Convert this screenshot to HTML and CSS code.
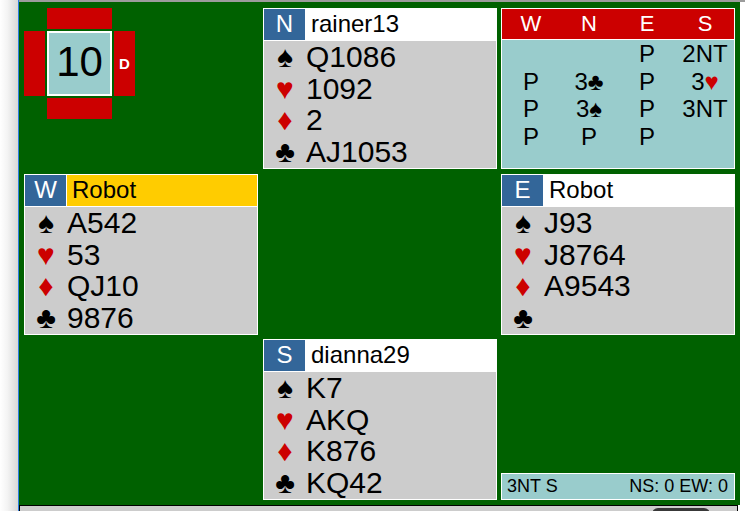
FILE: index.html
```html
<!DOCTYPE html>
<html>
<head>
<meta charset="utf-8">
<link rel="stylesheet" href="styles.css">
</head>
<body>
<div class="page">
  <div class="gutter"></div>
  <div class="main">
    <div class="topline"></div>
    <div class="table-area">
      <div class="board">
        <div class="dealer">
          <div class="bar bar-top"></div>
          <div class="bar bar-left"></div>
          <div class="board-no">10</div>
          <div class="bar bar-right">D</div>
          <div class="bar bar-bottom"></div>
        </div>

        <div class="hand north">
          <div class="hand-head"><div class="seat">N</div><div class="name">rainer13</div></div>
          <div class="hand-body">
            <div class="suit-row"><span class="suit">♠</span><span class="cards">Q1086</span></div>
            <div class="suit-row"><span class="suit red">♥</span><span class="cards">1092</span></div>
            <div class="suit-row"><span class="suit red">♦</span><span class="cards">2</span></div>
            <div class="suit-row"><span class="suit">♣</span><span class="cards">AJ1053</span></div>
          </div>
        </div>

        <div class="auction">
          <div class="auction-head"><span>W</span><span>N</span><span>E</span><span>S</span></div>
          <div class="auction-body">
            <span></span><span></span><span>P</span><span>2NT</span>
            <span>P</span><span>3♣</span><span>P</span><span>3<span class="red">♥</span></span>
            <span>P</span><span>3♠</span><span>P</span><span>3NT</span>
            <span>P</span><span>P</span><span>P</span><span></span>
          </div>
        </div>

        <div class="hand west">
          <div class="hand-head"><div class="seat">W</div><div class="name active">Robot</div></div>
          <div class="hand-body">
            <div class="suit-row"><span class="suit">♠</span><span class="cards">A542</span></div>
            <div class="suit-row"><span class="suit red">♥</span><span class="cards">53</span></div>
            <div class="suit-row"><span class="suit red">♦</span><span class="cards">QJ10</span></div>
            <div class="suit-row"><span class="suit">♣</span><span class="cards">9876</span></div>
          </div>
        </div>

        <div class="hand east">
          <div class="hand-head"><div class="seat">E</div><div class="name">Robot</div></div>
          <div class="hand-body">
            <div class="suit-row"><span class="suit">♠</span><span class="cards">J93</span></div>
            <div class="suit-row"><span class="suit red">♥</span><span class="cards">J8764</span></div>
            <div class="suit-row"><span class="suit red">♦</span><span class="cards">A9543</span></div>
            <div class="suit-row"><span class="suit">♣</span><span class="cards"></span></div>
          </div>
        </div>

        <div class="hand south">
          <div class="hand-head"><div class="seat">S</div><div class="name">dianna29</div></div>
          <div class="hand-body">
            <div class="suit-row"><span class="suit">♠</span><span class="cards">K7</span></div>
            <div class="suit-row"><span class="suit red">♥</span><span class="cards">AKQ</span></div>
            <div class="suit-row"><span class="suit red">♦</span><span class="cards">K876</span></div>
            <div class="suit-row"><span class="suit">♣</span><span class="cards">KQ42</span></div>
          </div>
        </div>

        <div class="score"><span>3NT S</span><span>NS: 0 EW: 0</span></div>
      </div>
      <div class="strip"></div>
    </div>
    <div class="bottombar"><div class="knob"></div></div>
  </div>
</div>
</body>
</html>
```
FILE: styles.css
```css
html, body {
  margin: 0;
  padding: 0;
  background: #ffffff;
  font-family: "Liberation Sans", Arial, sans-serif;
  color: #000;
}

.page {
  display: flex;
  width: 745px;
  height: 511px;
  overflow: hidden;
}

.gutter {
  width: 18px;
  flex: none;
  background: linear-gradient(to right, #ffffff 0%, #f4f4f4 40%, #d8d8d8 100%);
  border-right: 1px solid #2b7de0;
}

.main {
  flex: 1;
  min-width: 0;
  display: flex;
  flex-direction: column;
}

.topline {
  height: 2px;
  background: #9c9c9c;
}

.table-area {
  display: flex;
  height: 503px;
}

.strip {
  flex: 1;
  background: #ffffff;
}

.board {
  width: 721px;
  flex: none;
  box-sizing: border-box;
  background: #006100;
  padding: 6px 0 0 5px;
  display: grid;
  grid-template-columns: 239px 238px 234px;
  grid-template-rows: 166px 165px 161px;
}

.bottombar {
  width: 719px;
  height: 6px;
  box-sizing: border-box;
  border: 1px solid #000;
  border-bottom: none;
  background: #cccccc;
  position: relative;
}

.knob {
  position: absolute;
  left: 632px;
  top: 2px;
  width: 58px;
  height: 8px;
  background: #383838;
  border-radius: 6px 6px 0 0;
}

/* dealer indicator */
.dealer {
  grid-column: 1;
  grid-row: 1;
  align-self: start;
  justify-self: start;
  display: grid;
  grid-template-columns: 21px 65px 21px;
  grid-template-rows: 21px 65px 21px;
  gap: 2px;
}

.bar {
  background: #cc0000;
}

.bar-top { grid-column: 2; grid-row: 1; }
.bar-left { grid-column: 1; grid-row: 2; }
.bar-right {
  grid-column: 3;
  grid-row: 2;
  color: #ffffff;
  font-weight: bold;
  font-size: 15px;
  display: flex;
  align-items: center;
  justify-content: center;
}
.bar-bottom { grid-column: 2; grid-row: 3; }

.board-no {
  grid-column: 2;
  grid-row: 2;
  box-sizing: border-box;
  border: 2px solid #ffffff;
  background: #99cccc;
  font-size: 42px;
  display: flex;
  align-items: center;
  justify-content: center;
  padding-bottom: 3px;
}

/* hands */
.hand {
  width: 234px;
  height: 161px;
  box-sizing: border-box;
  border: 1px solid #ffffff;
  background: #cccccc;
  align-self: start;
}

.north { grid-column: 2; grid-row: 1; }
.west { grid-column: 1; grid-row: 2; }
.east { grid-column: 3; grid-row: 2; }
.south { grid-column: 2; grid-row: 3; }

.hand-head {
  display: flex;
  height: 32px;
  box-sizing: border-box;
  border-bottom: 1px solid #ffffff;
  font-size: 24px;
  line-height: 30px;
}

.seat {
  width: 41px;
  flex: none;
  border-right: 1px solid #ffffff;
  background: #336699;
  color: #ffffff;
  text-align: center;
}

.name {
  flex: 1;
  background: #ffffff;
  padding-left: 5px;
}

.name.active {
  background: #ffcc00;
}

.suit-row {
  display: flex;
  height: 31.5px;
  line-height: 31.5px;
  font-size: 30px;
}

.suit {
  width: 42px;
  flex: none;
  text-align: center;
}

.red {
  color: #cc0000;
}

/* auction */
.auction {
  grid-column: 3;
  grid-row: 1;
  align-self: start;
  width: 234px;
  height: 161px;
  box-sizing: border-box;
  border: 1px solid #ffffff;
  background: #99cccc;
}

.auction-head {
  display: grid;
  grid-template-columns: repeat(4, 1fr);
  height: 31px;
  box-sizing: border-box;
  border-bottom: 1px solid #ffffff;
  background: #cc0000;
  color: #ffffff;
  font-size: 22px;
  line-height: 30px;
  text-align: center;
}

.auction-body {
  display: grid;
  grid-template-columns: repeat(4, 1fr);
  grid-auto-rows: 27.5px;
  line-height: 27.5px;
  font-size: 24px;
  text-align: center;
}

/* score */
.score {
  grid-column: 3;
  grid-row: 3;
  align-self: end;
  width: 234px;
  height: 27px;
  box-sizing: border-box;
  border: 1px solid #ffffff;
  background: #99cccc;
  display: flex;
  justify-content: space-between;
  padding: 0 6px 0 5px;
  font-size: 18px;
  line-height: 25px;
}
```
